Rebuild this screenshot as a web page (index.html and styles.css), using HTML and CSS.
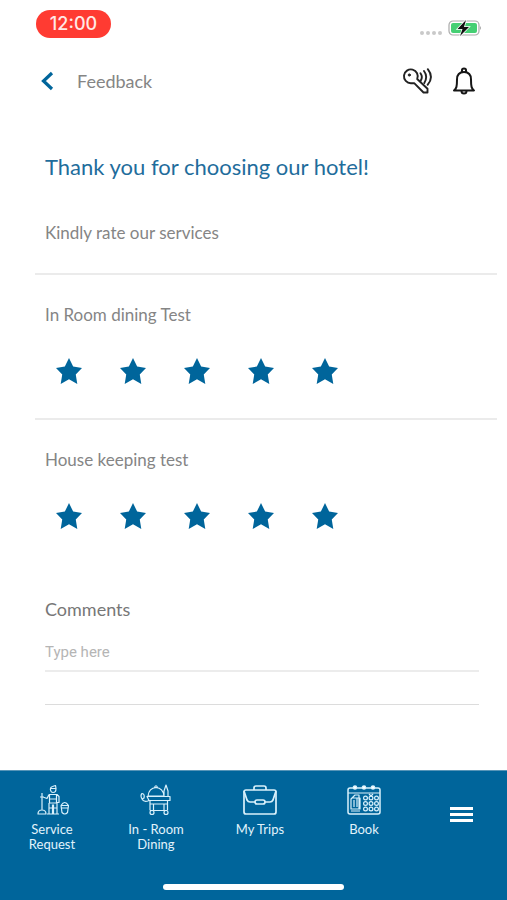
FILE: index.html
```html
<!DOCTYPE html>
<html lang="en">
<head>
<meta charset="utf-8">
<meta name="viewport" content="width=device-width, initial-scale=1">
<title>Feedback</title>
<link rel="stylesheet" href="styles.css">
</head>
<body>
<div class="status">
  <span class="clock">12:00</span>
  <div class="indicators">
    <span class="signal"><i></i><i></i><i></i><i></i></span>
    <svg class="battery" viewBox="0 0 34 18" aria-hidden="true">
      <rect x="1" y="2" width="30" height="14" rx="4" fill="#fff" stroke="#aaa" stroke-width="1.2"/>
      <rect x="3" y="4" width="26" height="10" rx="2" fill="#45cf73"/>
      <path d="M32 7q2 2 0 4z" fill="#aaa"/>
      <path d="M18 1 9.500 10h5L12 17l9-9h-5l2-7z" fill="#111" stroke="#fff" stroke-width="1.500" paint-order="stroke"/>
    </svg>
  </div>
</div>
<header class="topbar">
  <button class="icon-button back" aria-label="Back"><svg viewBox="0 0 14 20"><path d="M12 2 3.500 10l8.500 8" fill="none" stroke="#00659b" stroke-width="3.200"/></svg></button>
  <h1 class="page-title">Feedback</h1>
  <button class="icon-button" aria-label="Digital key"><svg class="key" viewBox="0 0 32 28" fill="none" stroke="#222" stroke-width="1.900" stroke-linecap="round" stroke-linejoin="round"><path d="M15.200 12A6.900 6.900 0 1 0 9 16.200h3.200l9.300 9.300H25.500V21.800L15.200 12z"/><circle cx="7.300" cy="8" r="1.100" fill="#222" stroke-width="1"/><path d="M18.500 6.200q2.600 3.600.2 7.600M22 4q4.200 5.600.3 12M25.800 2.200q6.400 8-.2 15.600"/></svg></button>
  <button class="icon-button" aria-label="Notifications"><svg class="bell" viewBox="0 0 24 28" fill="none" stroke="#161616" stroke-width="2" stroke-linejoin="round"><path d="M2 23.500c2.500-2 3-4 3-11C5 7.500 8 5 12 5s7 2.500 7 7.500c0 7 .5 9 3 11z"/><path d="M10 5V3q0-1.500 2-1.500T14 3v2M9.500 24q0 2.500 2.500 2.500t2.500-2.500"/></svg></button>
</header>
<main class="content">
  <section class="intro">
    <h2 class="thanks">Thank you for choosing our hotel!</h2>
    <p class="label">Kindly rate our services</p>
  </section>
  <fieldset class="rating">
    <legend class="label">In Room dining Test</legend>
    <div class="stars">
      <input type="radio" name="dining" aria-label="1 star">
      <input type="radio" name="dining" aria-label="2 stars">
      <input type="radio" name="dining" aria-label="3 stars">
      <input type="radio" name="dining" aria-label="4 stars">
      <input type="radio" name="dining" aria-label="5 stars" checked>
    </div>
  </fieldset>
  <fieldset class="rating">
    <legend class="label">House keeping test</legend>
    <div class="stars">
      <input type="radio" name="housekeeping" aria-label="1 star">
      <input type="radio" name="housekeeping" aria-label="2 stars">
      <input type="radio" name="housekeeping" aria-label="3 stars">
      <input type="radio" name="housekeeping" aria-label="4 stars">
      <input type="radio" name="housekeeping" aria-label="5 stars" checked>
    </div>
  </fieldset>
  <section class="comments">
    <label class="comments-label" for="comments">Comments</label>
    <input class="comments-input" id="comments" type="text" placeholder="Type here">
  </section>
</main>
<footer class="bottom">
  <nav class="tabs">
    <a class="tab" href="#service">
      <svg viewBox="0 0 34 32"><path d="M15.500 6q-.5-3 2-3.500l3-1 .5 3q0 4-3 4-2 0-2.500-2.500zM15 4.500h6M14 10.500h8l2 2v6h-2M14 10.500l-2 4-4-1.500M14.500 10.500V19h7v-8.500M14 15h8M14 19v11h3.500V20.500M22 19v11h-3.500V20.500M14 24h8M12 30h12M7 9v17M5 13h4M3 30q0-4 4-4t4 4zM26 21.500h7.500l-1 7q-2.700 3-5.500 0zM26 21.500q3.700-6 7.500 0M26 24h7"/></svg>
      <span>Service<br>Request</span></a>
    <a class="tab" href="#dining">
      <svg viewBox="0 0 34 32"><path d="M9 12q1-8 8-8.500 7 .5 8 8.500zM15.500 3.500q1.500-3.500 3 0M25 12V7l2-6 2 6v5M8 12.500h23v4H10zM11 16.500v10M28.500 16.500v10M11 20h17M11 26.500h17M14.500 20v6M25 20v6M10 16.500Q5 19 3 15M5 14q1-4-2-4.500-2 2 0 5.500z"/><circle cx="13" cy="28.500" r="2"/><circle cx="27" cy="28.500" r="2"/></svg>
      <span>In - Room<br>Dining</span></a>
    <a class="tab" href="#trips">
      <svg viewBox="0 0 34 32"><g stroke-width="1.700"><rect x="1" y="6" width="32" height="24" rx="2"/><path d="M11 6V4q0-2 2-2h8q2 0 2 2v2M1 7l3 9q1 2 3 2h5M33 7l-3 9q-1 2-3 2h-5"/><rect x="12" y="16" width="10" height="4" rx="2"/></g></svg>
      <span>My Trips</span></a>
    <a class="tab" href="#book">
      <svg viewBox="0 0 34 32"><rect x="1" y="4" width="32" height="26" rx="2" stroke-width="1.500"/><path d="M1 9h32M5 14h8v11H4V15zM5 14l3-3h4v14M7 16v7M10 14v9M4 27h9"/><g><circle cx="8" cy="3.500" r="1.700" fill="#fff"/><circle cx="17" cy="3.500" r="1.700" fill="#fff"/><circle cx="26" cy="3.500" r="1.700" fill="#fff"/><circle cx="18.500" cy="14" r="1.900"/><circle cx="24" cy="14" r="1.900"/><circle cx="29.500" cy="14" r="1.900"/><circle cx="18.500" cy="19.500" r="1.900"/><circle cx="24" cy="19.500" r="1.900"/><circle cx="29.500" cy="19.500" r="1.900"/><circle cx="18.500" cy="25" r="1.900"/><circle cx="24" cy="25" r="1.900"/><circle cx="29.500" cy="25" r="1.900"/></g><path d="m22 10 2 2 2-2"/></svg>
      <span>Book</span></a>
    <button class="menu" aria-label="Menu"><i></i><i></i><i></i></button>
  </nav>
  <div class="home-bar"></div>
</footer>
</body>
</html>
```
FILE: styles.css
```css
* { box-sizing: border-box; }

body {
  display: flex;
  flex-direction: column;
  min-height: 100vh;
  margin: 0;
  background: #fff;
  color: #858585;
  font-family: Lato, "Liberation Sans", sans-serif;
}

h1, h2, p { margin: 0; font-weight: 400; }
button { padding: 0; border: 0; background: none; cursor: pointer; }
svg { display: block; }

.status {
  display: flex;
  justify-content: space-between;
  align-items: center;
  padding: 10px 25px 0 36px;
}
.clock {
  width: 75px;
  border-radius: 14px;
  background: #ff3b32;
  color: #ffe9e6;
  font: 500 18px/28px Inter, sans-serif;
  text-align: center;
}
.indicators { display: flex; align-items: center; gap: 6px; padding-top: 8px; }
.signal { display: flex; gap: 2px; padding-top: 9px; }
.signal i { width: 4px; height: 4px; border-radius: 50%; background: #c9c9c9; }
.battery { width: 34px; height: 18px; }

.topbar {
  display: flex;
  align-items: center;
  gap: 18px;
  height: 64px;
  padding: 22px 31px 0 40px;
}
.back svg { width: 14px; height: 20px; }
.page-title { flex: 1; padding-left: 5px; font-size: 18px; line-height: 24px; }
.key { width: 32px; height: 28px; }
.bell { width: 24px; height: 28px; }

.content { flex: 1; padding: 51px 10px 0 35px; }
.intro { padding: 0 10px 28px; }
.thanks { margin-bottom: 40px; color: #1f6d9c; font-size: 22px; line-height: 28px; }
.label { font-size: 17px; line-height: 24px; }

.rating {
  margin: 0;
  padding: 28px 10px 34px;
  border: 0;
  border-top: 2px solid #ebebeb;
}
.rating legend { float: left; width: 100%; padding: 0; }
.stars { display: flex; gap: 38px; clear: both; padding: 31px 0 0 11px; }
.stars input {
  width: 26px;
  height: 26px;
  margin: 0;
  appearance: none;
  background: #00659b;
  clip-path: polygon(50% 0, 66% 33%, 100% 38%, 76% 63%, 82% 100%, 50% 82%, 18% 100%, 24% 63%, 0 38%, 34% 33%);
  cursor: pointer;
}

.comments { margin: 34px 18px 0 10px; padding-bottom: 32px; border-bottom: 1px solid #dcdcdc; }
.comments-label { display: block; color: #777; font-size: 18px; line-height: 24px; }
.comments-input {
  display: block;
  width: 100%;
  height: 51px;
  padding: 12px 0 0;
  border: 0;
  border-bottom: 2px solid #ececec;
  border-radius: 0;
  background: none;
  color: #777;
  font: 15px Roboto, sans-serif;
}
.comments-input::placeholder { color: #b5b5b5; }

.bottom { background: #00659b; border-top: 1px solid #5795b8; }
.tabs { display: grid; grid-template-columns: repeat(4, 104fr) 91fr; height: 113px; }
.tab {
  display: flex;
  flex-direction: column;
  align-items: center;
  gap: 6px;
  padding-top: 13px;
  color: #e2f3fb;
  font-size: 13px;
  line-height: 15px;
  text-align: center;
  text-decoration: none;
}
.tab svg { width: 34px; height: 32px; fill: none; stroke: #d9f1fc; stroke-width: 1.2; stroke-linejoin: round; }
.menu {
  display: flex;
  flex-direction: column;
  align-items: center;
  gap: 3px;
  padding-top: 36px;
}
.menu i { width: 23px; height: 3px; background: #fff; }
.home-bar { width: 181px; height: 6px; margin: 0 auto 10px; border-radius: 3px; background: #fff; }
```
